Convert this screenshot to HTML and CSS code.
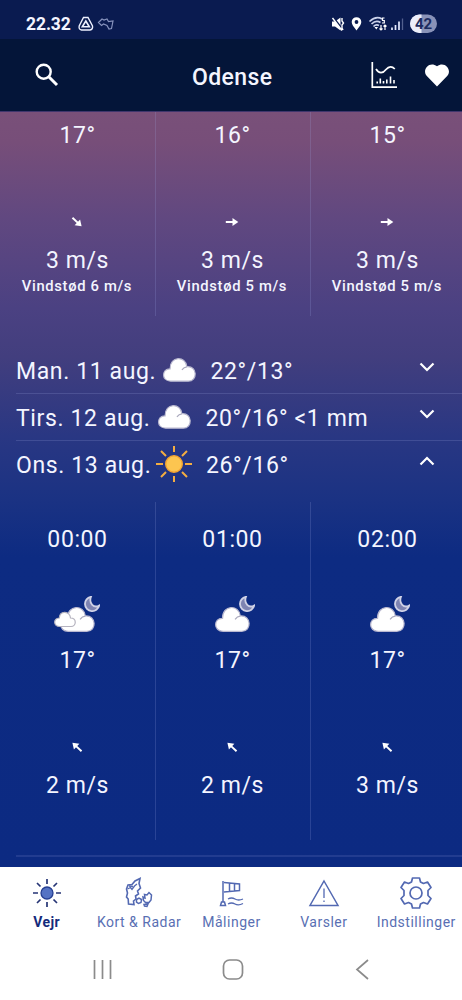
FILE: index.html
```html
<!DOCTYPE html>
<html lang="da">
<head>
<meta charset="utf-8">
<meta name="viewport" content="width=device-width, initial-scale=1">
<title>Odense</title>
<link rel="stylesheet" href="styles.css">
</head>
<body>
<svg class="defs" width="0" height="0">
  <defs>
    <symbol id="cloud" viewBox="0 0 36 26">
      <path d="M9 24.500C-1 24.500-.5 11.500 8.300 11.800C8 -1.500 24.500-2 25.600 9.600C36.500 8.500 37 24.500 27 24.500Z" fill="#fff" stroke="#b9b8cf" stroke-width="1.200"/>
      <path d="M20.500 12.800Q22.500 10 25.600 9.800" fill="none" stroke="#aaa9bd" stroke-width="1.200"/>
    </symbol>
    <symbol id="moon" viewBox="0 0 16 16">
      <path d="M7 .8A7.200 7.200 0 1 0 15.200 9.500C10 12.500 4.500 7.500 7 .8Z" fill="#7e84b2" stroke="#d0d2e6" stroke-width="1.800"/>
    </symbol>
    <symbol id="arrow" viewBox="0 0 14 14">
      <path d="M.8 7H9" stroke="#fff" stroke-width="2"/><path d="M7.500 3L13.300 7L7.500 11Z" fill="#fff"/>
    </symbol>
    <symbol id="chevron" viewBox="0 0 16 10">
      <path d="M1.500 1.500L8 8L14.500 1.500" fill="none" stroke="#fff" stroke-width="2.200"/>
    </symbol>
  </defs>
</svg>
<div class="phone">
  <div class="status">
    <span class="clock">22.32</span>
    <svg class="status-left" width="38" height="16" viewBox="0 0 38 16" fill="none">
      <path d="M5.500 1.500H10L14.500 10Q15 13.500 12 14H3.500Q.5 13.500 1.200 10Z" stroke="#eef1ff" stroke-width="1.400"/>
      <path d="M7.800 5L11.300 10.800H4.300Z" stroke="#eef1ff" stroke-width="1.600"/>
      <path d="M20.500 6.500L24 3L26 4L29 3L30.500 5.500L35 5L33.500 12.500L31 13L29 9.500L25.500 8L23.500 9.500Z" stroke="#8793bd" stroke-width="1.200"/>
    </svg>
    <svg class="status-right" width="106" height="22" viewBox="0 0 106 22" fill="none">
      <path d="M1 8.500H4L9.500 4.500V17.500L4 13.500H1Z" fill="#fff"/><path d="M2 4L12 17" stroke="#0a1b50" stroke-width="2"/><path d="M1.500 5L11 17.500M11 5V8L12.500 10L11 12V15L12 17" stroke="#fff" stroke-width="1.400"/>
      <path d="M25.500 17.500C22.500 13.500 20.700 11.500 20.700 9A4.800 4.800 0 0 1 30.300 9C30.300 11.500 28.500 13.500 25.500 17.500Z" fill="#fff"/><circle cx="25.500" cy="9" r="1.900" fill="#0a1b50"/>
      <path d="M38.500 8.500Q45 2.500 51 6M40.500 11Q45 6.700 49.500 9.500M42.500 13.500Q45 11 48 12.500" stroke="#cbd2eb" stroke-width="1.700"/><path d="M43.500 14H47L45.300 16.500Z" fill="#fff"/>
      <path d="M53.500 5H51.500V7.500H53.300V10H51M50 12V17M48.500 15.500L50 17L51.500 15.500M54 17V12M52.500 13.500L54 12L55.500 13.500" stroke="#fff" stroke-width="1.200"/>
      <path d="M61 14.500V17M64.500 12V17M68 8.500V17" stroke="#e6eaff" stroke-width="1.700"/><path d="M71.500 5.500V17" stroke="#52608e" stroke-width="1.300"/>
      <rect x="79" y="1.500" width="27" height="18.500" rx="9.250" fill="#8992b8"/><path d="M90.500 1.500H88.250A9.250 9.250 0 0 0 88.250 20H90.500Z" fill="#eceefa"/>
      <text class="battery" x="92.500" y="15.800" text-anchor="middle">42</text>
    </svg>
  </div>

  <header class="header">
    <svg width="26" height="26" viewBox="0 0 26 26" fill="none" stroke="#fff" stroke-width="2.400"><circle cx="9.700" cy="9.700" r="7"/><path d="M15 15L23 23" stroke-width="3"/></svg>
    <h1>Odense</h1>
    <div class="actions">
      <svg width="27" height="28" viewBox="0 0 27 28" fill="none" stroke="#fff" stroke-width="1.700"><path d="M1.300 1V26.200H26"/><path d="M5 8C8 13 12 12.500 15 8.500C18 5 21 5 23.800 8"/><path d="M6.200 20.500V22.500M9.300 17.500V22.500M12.500 20V22.500M15.800 18.500V22.500M19.500 15.500V22.500M23 19V22.500" stroke-width="1.600"/></svg>
      <svg width="26" height="24" viewBox="0 0 26 24"><path d="M13 23.500L2.600 12.800C-2.400 6.500 5.500-2.500 13 3.200C20.500-2.500 28.400 6.500 23.400 12.800Z" fill="#fff"/></svg>
    </div>
  </header>

  <main class="content">
    <section class="hours partial">
      <div class="hour"><div class="value">17°</div><svg class="wind se"><use href="#arrow"/></svg><div class="value speed">3 m/s</div><div class="gust">Vindstød 6 m/s</div></div>
      <div class="hour"><div class="value">16°</div><svg class="wind"><use href="#arrow"/></svg><div class="value speed">3 m/s</div><div class="gust">Vindstød 5 m/s</div></div>
      <div class="hour"><div class="value">15°</div><svg class="wind"><use href="#arrow"/></svg><div class="value speed">3 m/s</div><div class="gust">Vindstød 5 m/s</div></div>
    </section>

    <section class="days">
      <div class="day"><span class="date monday">Man. 11 aug.</span><svg class="cloud"><use href="#cloud"/></svg><span class="range">22°/13°</span><svg class="chevron"><use href="#chevron"/></svg></div>
      <div class="day"><span class="date tuesday">Tirs. 12 aug.</span><svg class="cloud"><use href="#cloud"/></svg><span class="range">20°/16° &lt;1 mm</span><svg class="chevron"><use href="#chevron"/></svg></div>
      <div class="day"><span class="date wednesday">Ons. 13 aug.</span>
        <svg class="sun" viewBox="0 0 38 38"><circle cx="19" cy="19" r="8.300" fill="#fcc550" stroke="#f3a532" stroke-width="1.400"/><path d="M19 1V7M19 31V37M1 19H8M30 19H37M6 6L11 11M27 27L32 32M6 32L11 27M27 11L32 6" stroke="#f3ad42" stroke-width="2"/></svg>
        <span class="range">26°/16°</span><svg class="chevron up"><use href="#chevron"/></svg></div>
    </section>

    <section class="hours full">
      <div class="hour"><div class="value">00:00</div>
        <svg class="night" viewBox="0 0 50 38"><use href="#moon" x="33" y="0" width="16" height="16"/><use href="#cloud" x="8" y="10" width="37" height="27"/><path d="M9 30.500C2 30.500 2 22 8.300 22C9 14 19 15 19.500 22C26 22 25.500 30.500 20 30.500Z" fill="#fff" stroke="#b5b3bf" stroke-width="1.200"/></svg>
        <div class="value temp">17°</div><svg class="wind nw"><use href="#arrow"/></svg><div class="value speed">2 m/s</div></div>
      <div class="hour"><div class="value">01:00</div>
        <svg class="night" viewBox="0 0 50 38"><use href="#moon" x="33" y="0" width="16" height="16"/><use href="#cloud" x="8" y="10" width="37" height="27"/></svg>
        <div class="value temp">17°</div><svg class="wind nw"><use href="#arrow"/></svg><div class="value speed">2 m/s</div></div>
      <div class="hour"><div class="value">02:00</div>
        <svg class="night" viewBox="0 0 50 38"><use href="#moon" x="33" y="0" width="16" height="16"/><use href="#cloud" x="8" y="10" width="37" height="27"/></svg>
        <div class="value temp">17°</div><svg class="wind nw"><use href="#arrow"/></svg><div class="value speed">3 m/s</div></div>
    </section>
    <div class="rule"></div>
  </main>

  <nav class="tabs">
    <div class="tab active">
      <svg viewBox="0 0 32 32"><circle cx="16" cy="16" r="6" fill="#5573c4" stroke="#263f92" stroke-width="1.300"/><path d="M16 2V7M16 25V30M2 16H7M25 16H30M6 6L9.500 9.500M22.500 22.500L26 26M6 26L9.500 22.500M22.500 9.500L26 6" stroke="#263575" stroke-width="1.700"/></svg>
      <span>Vejr</span></div>
    <div class="tab">
      <svg viewBox="0 0 32 32"><path d="M17 1.500L16 6.500L17.500 11L14.500 14L15.500 17L12.500 19L13 22L10.500 24L11 27.500L5.500 27L5.200 22L3.500 20L4.500 16L3.500 12L5 8L9 7.500L12 4Z" stroke-width="1.600"/><path d="M4.500 12L7.500 10.500L9 12.500L11.500 9L14 7M6 9L10 9.500"/><path d="M13.500 22.500L16 21L18.500 22.500L18 25.500L15.500 26.500L13.500 25ZM20 20L22 21L21.500 17.500L24 18L26 15.500L28.500 18L28 23L26 25.500H22.500L20.500 23.500ZM21 27.500L25 27L24 29.500L21.500 29Z" stroke-width="1.500"/></svg>
      <span>Kort &amp; Radar</span></div>
    <div class="tab">
      <svg viewBox="0 0 32 32"><path d="M8 4V25M9 5.500L24.500 7V13.500L9 15M14.500 6V14.500M19.500 6.500V14" stroke-width="1.500"/><path d="M6.500 25H9.500L10.500 28.500H5.500Z" stroke-width="1.500"/><path d="M13 22Q16.500 20 20 22T28 22M13 27Q16.500 25 20 27T28 26.500"/></svg>
      <span>Målinger</span></div>
    <div class="tab">
      <svg viewBox="0 0 32 32"><path d="M16 4L30 28.500H2Z" stroke-width="1.500"/><path d="M16 11.500V21M16 23.500V25"/></svg>
      <span>Varsler</span></div>
    <div class="tab">
      <svg viewBox="0 0 32 32"><path d="M12.500 1H19.500L20.500 5L23.500 6.500L27.500 5L31 10.500L28 13.500V18.500L31 21.500L27.500 27L23.500 25.500L20.500 27L19.500 31H12.500L11.500 27L8.500 25.500L4.500 27L1 21.500L4 18.500V13.500L1 10.500L4.500 5L8.500 6.500L11.500 5Z" stroke-width="1.700" stroke-linejoin="round"/><circle cx="16" cy="16" r="6" stroke-width="1.700"/></svg>
      <span>Indstillinger</span></div>
  </nav>
  <div class="system">
    <svg viewBox="0 0 22 24"><path d="M2.500 2V21M10.500 2V21M18.500 2V21"/></svg>
    <svg viewBox="0 0 22 24"><rect x="1.500" y="2" width="19" height="19" rx="6"/></svg>
    <svg viewBox="0 0 22 24"><path d="M16 2L5 11.500L16 21"/></svg>
  </div>
</div>
</body>
</html>
```

FILE: styles.css
```css
* { box-sizing: border-box; }
body { margin: 0; font-family: Roboto, sans-serif; color: #f4f5ff; }
svg { display: block; flex: none; }
.defs { position: absolute; }
.phone { width: 462px; height: 1000px; overflow: hidden; display: flex; flex-direction: column; background: #fff; }

.status { height: 39px; background: #0a1b50; display: flex; align-items: center; padding: 9px 25px 0 26px; }
.clock { font-weight: 700; font-size: 17.5px; line-height: 22px; letter-spacing: -.1px; width: 52px; }
.status-right { margin-left: auto; }
.battery { font: 700 15px Roboto, sans-serif; fill: #1b2b60; }

.header { height: 72px; background: #041539; display: grid; grid-template-columns: 158px 1fr auto; align-items: center; padding: 0 12px 0 34px; }
.header h1 { margin: 5px 0 0; font-size: 23px; line-height: 30px; font-weight: 500; letter-spacing: .4px; }
.actions { display: flex; align-items: center; gap: 26px; }

.content { height: 756px; flex: none; overflow: hidden; border-top: 1px solid #40366d;
  background: linear-gradient(#795079 0, #774e79 30px, #614880 105px, #4b4182 196px, #423e7e 245px, #293783 325px, #1a3283 390px, #0d2b82 445px, #0c2a82 100%); }
.hours { display: grid; grid-template-columns: repeat(3, 155px); }
.hour { display: flex; flex-direction: column; align-items: center; }
.hour + .hour { box-shadow: inset 1px 0 rgba(160, 170, 230, .2); }
.partial { height: 204px; }
.full { height: 338px; margin-top: 14px; }
.value { font-size: 23px; line-height: 28px; letter-spacing: .6px; }
.partial .value:first-child { margin-top: 10px; }
.wind { width: 14px; height: 14px; margin: 65px 1px 0 0; }
.se { transform: rotate(43deg); }
.nw { transform: rotate(223deg); }
.speed { margin-top: 18px; }
.gust { font-size: 14.8px; line-height: 20px; font-weight: 500; letter-spacing: .65px; margin: 1px 1px 0 0; }
.full .value:first-child { margin-top: 24px; }
.night { width: 50px; height: 38px; margin-top: 42px; margin-right: 3px; }
.temp { margin-top: 13px; }

.days { margin: 31px 0 0 16px; width: 446px; }
.day { display: flex; align-items: center; height: 47px; font-size: 23px; letter-spacing: .62px; border-bottom: 1px solid rgba(160, 170, 230, .2); padding-right: 27px; }
.day:last-child { border: 0; }
.date, .range { white-space: nowrap; padding-top: 2px; }
.monday { width: 146px; }
.tuesday { width: 141px; }
.wednesday { width: 139px; }
.cloud { width: 35px; height: 26px; }
.range { margin-left: 13.5px; }
.sun { width: 38px; height: 38px; margin-top: -2px; }
.sun + .range { margin-left: 13px; }
.chevron { width: 16px; height: 10px; margin: -6px 0 0 auto; }
.chevron.up { transform: rotate(180deg); margin-top: -8px; }
.rule { height: 2px; margin: 15px 0 0 16px; background: rgba(160, 170, 230, .15); }

.tabs { height: 73px; flex: none; display: grid; grid-template-columns: repeat(5, 92.400px); color: #596fb3; padding: 10px 0 0 .5px; }
.tab { display: flex; flex-direction: column; align-items: center; white-space: nowrap; font-size: 14px; line-height: 18px; letter-spacing: .5px; }
.tab svg { width: 32px; height: 32px; fill: none; stroke: #5369b2; stroke-width: 1.300px; }
.tab span { margin-top: 4px; }
.active { color: #142b7b; font-weight: 700; letter-spacing: .4px; }
.system { display: flex; justify-content: space-between; padding: 18px 88px 0 92px; }
.system svg { width: 22px; height: 24px; fill: none; stroke: #8b8b8b; stroke-width: 1.700px; }
```
